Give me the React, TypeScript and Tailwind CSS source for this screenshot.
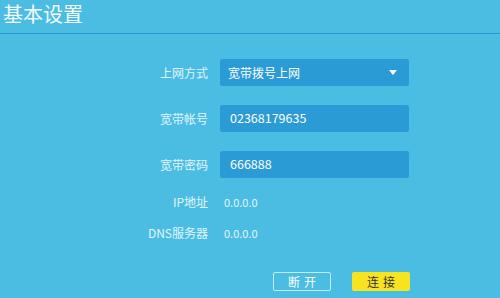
import React from "react";

const font = { fontFamily: '"Noto Sans CJK SC", "Noto Sans", sans-serif' };

function Label({ children }: { children: React.ReactNode }) {
    return (
        <div className="w-[208px] shrink-0 text-right text-[12px] text-[#e3f5fc]">
            {children}
        </div>
    );
}

export default function App() {
    return (
        <div
            className="w-[500px] h-[298px] bg-[#4bbde3] overflow-hidden text-white"
            style={font}
        >
            {/* Title */}
            <div className="pl-[3px] text-[20px] leading-[28px] text-[#f4fbfe]">基本设置</div>
            <div className="mt-[5px] h-px bg-[#2f92d0]" />

            {/* Form */}
            <div className="mt-[25px] flex flex-col">
                <div className="flex items-center gap-[12px] h-[27px]">
                    <Label>上网方式</Label>
                    <div className="w-[189px] h-[27px] bg-[#2b9bd6] rounded-[2px] flex items-center justify-between pl-[8px] pr-[12px] text-[12px]">
                        <span>宽带拨号上网</span>
                        <svg width="8" height="6" viewBox="0 0 8 6">
                            <path d="M0 0 L8 0 L4 5 Z" fill="#ffffff" />
                        </svg>
                    </div>
                </div>

                <div className="mt-[19px] flex items-center gap-[12px] h-[27px]">
                    <Label>宽带帐号</Label>
                    <div className="w-[189px] h-[27px] bg-[#2b9bd6] rounded-[2px] flex items-center pl-[10px] text-[12.5px]">
                        02368179635
                    </div>
                </div>

                <div className="mt-[19px] flex items-center gap-[12px] h-[27px]">
                    <Label>宽带密码</Label>
                    <div className="w-[189px] h-[27px] bg-[#2b9bd6] rounded-[2px] flex items-center pl-[10px] text-[12.5px]">
                        666888
                    </div>
                </div>

                <div className="mt-[14px] flex items-center gap-[16px] h-[20px]">
                    <Label>IP地址</Label>
                    <span className="text-[11px] text-[#e3f5fc]">0.0.0.0</span>
                </div>

                <div className="mt-[11px] flex items-center gap-[16px] h-[20px]">
                    <Label>DNS服务器</Label>
                    <span className="text-[11px] text-[#e3f5fc]">0.0.0.0</span>
                </div>

                {/* Buttons */}
                <div className="mt-[29px] flex pl-[273px] gap-[21px]">
                    <button className="w-[58px] h-[19px] border border-[#c4ecf9] rounded-[2px] text-[12px] leading-none text-white tracking-[4px] pl-[4px]">
                        断开
                    </button>
                    <button className="w-[58px] h-[19px] bg-[#f7e320] rounded-[2px] text-[12px] leading-none text-[#333333] tracking-[4px] pl-[4px]">
                        连接
                    </button>
                </div>
            </div>
        </div>
    );
}
